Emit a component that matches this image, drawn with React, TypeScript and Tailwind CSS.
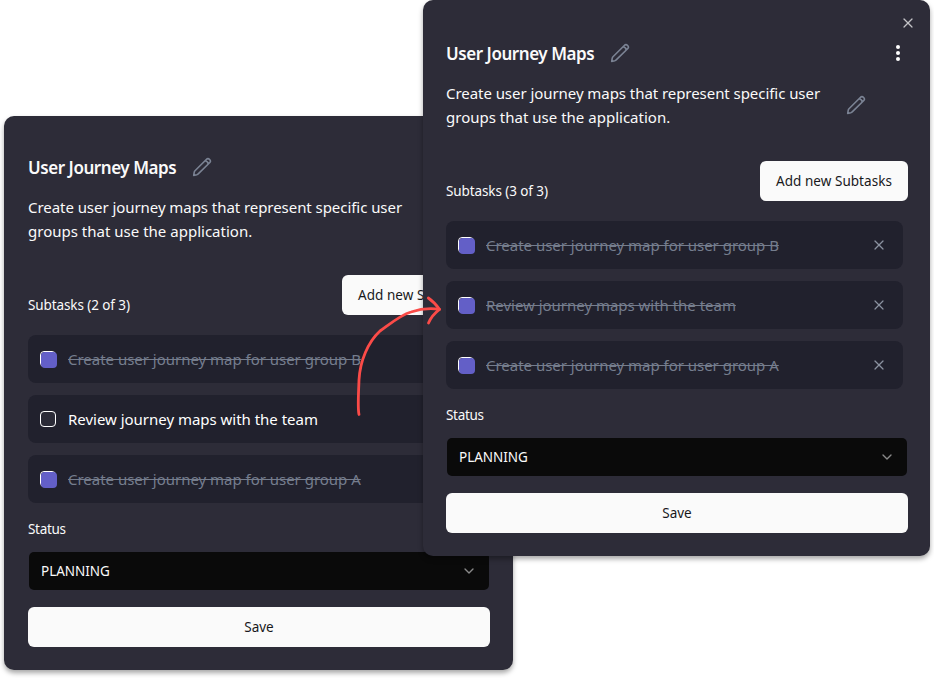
import React from "react";
import { X, ChevronDown } from "lucide-react";

type Subtask = { title: string; done: boolean };

function Pencil() {
  return (
    <svg className="size-5 shrink-0 text-[#7b8394]" viewBox="0 0 20 20" fill="none" stroke="currentColor" strokeWidth="1.6" strokeLinecap="round" strokeLinejoin="round">
      <path d="M14.300 2.500A2.300 2.300 0 0 1 17.600 5.800L6.200 16.900Q5.600 17.500 4.800 17.700L1.700 18.400L2.200 15.300Q2.400 14.400 3 13.800ZM13 3.800Q15.700 4.300 16.300 7" />
    </svg>
  );
}

function Checkbox({ checked }: { checked: boolean }) {
  return (
    <span className="block size-4 shrink-0 rounded-[4px] border border-white bg-[#2b2b37]">
      {checked && <span className="block size-4 rounded-[4px] bg-[#635fc7]" />}
    </span>
  );
}

function Row({ title, done }: Subtask) {
  return (
    <li className="flex h-12 w-[457px] items-center rounded-lg bg-[#21212d] pr-4 pl-3">
      <Checkbox checked={done} />
      <span className={`ml-3 flex-1 text-[15px] leading-6 tracking-[-0.02px] ${done ? "text-[#757d8d] line-through decoration-1" : "text-white"}`}>
        {title}
      </span>
      <X className="size-4 text-[#8b92a0]" strokeWidth={1.8} />
    </li>
  );
}

function TaskDialog({ subtasks, className }: { subtasks: Subtask[]; className: string }) {
  const done = subtasks.filter((s) => s.done).length;
  return (
    <section className={`absolute rounded-[10px] bg-[#2d2c38] text-[#fafafa] shadow-[0_3px_5px_rgba(0,0,0,0.35)] ${className}`}>
      <X className="absolute top-[15px] right-[14px] size-4 text-[#c3c3c7]" strokeWidth={1.8} />
      <div className="w-[462px]">
        <header className="flex h-7 items-center">
          <h2 className="w-[148px] text-[17px] leading-7 font-semibold tracking-[-0.45px] whitespace-nowrap">User Journey Maps</h2>
          <div className="-mt-0.5 ml-4"><Pencil /></div>
          <svg className="-mt-0.5 ml-auto h-5 w-5" viewBox="0 0 20 20" fill="white">
            <circle cx="10" cy="4" r="2" />
            <circle cx="10" cy="10" r="2" />
            <circle cx="10" cy="16" r="2" />
          </svg>
        </header>
        <div className="mt-[13px] flex items-center">
          <p className="w-[400px] text-[15px] leading-6 tracking-[-0.055px]">
            Create user journey maps that represent specific user
            <br />
            <span className="tracking-[0.01px]">groups that use the application.</span>
          </p>
          <Pencil />
        </div>
        <div className="mt-8 flex h-10 items-center justify-between">
          <h3 className="pt-5 text-[13.5px] leading-5 tracking-[-0.1px]">Subtasks ({done} of {subtasks.length})</h3>
          <button className="h-10 w-[148px] rounded-md bg-[#fafafa] text-[13.5px] tracking-[0.04px] whitespace-nowrap text-[#18181b]">
            Add new Subtasks
          </button>
        </div>
        <ul className="mt-5 flex flex-col gap-3">
          {subtasks.map((s) => <Row key={s.title} {...s} />)}
        </ul>
        <h3 className="mt-4 text-[13.5px] leading-5 tracking-[-0.3px]">Status</h3>
        <div className="mx-px mt-[13px] flex h-[38px] items-center justify-between rounded-[5px] bg-[#0a0a0a] px-3">
          <span className="text-[13.5px] tracking-[-0.04px]">PLANNING</span>
          <ChevronDown className="size-4 text-[#8a8a8a]" strokeWidth={2} />
        </div>
        <button className="mt-[17px] h-10 w-full rounded-md bg-[#fafafa] text-[13.5px] text-[#18181b]">Save</button>
      </div>
    </section>
  );
}

const groupB = "Create user journey map for user group B";
const review = "Review journey maps with the team";
const groupA = "Create user journey map for user group A";

export default function App() {
  return (
    <main className="relative h-[678px] w-[934px] overflow-hidden bg-white font-['Noto_Sans','Open_Sans',sans-serif]">
      <TaskDialog
        className="top-[116px] left-1 h-[554px] w-[509px] pt-[38px] pl-6"
        subtasks={[{ title: groupB, done: true }, { title: review, done: false }, { title: groupA, done: true }]}
      />
      <TaskDialog
        className="top-0 left-[423px] h-[556px] w-[507px] pt-10 pl-[23px]"
        subtasks={[{ title: groupB, done: true }, { title: review, done: true }, { title: groupA, done: true }]}
      />
      <svg className="absolute top-[290px] left-[350px] h-[130px] w-[100px]" viewBox="350 290 100 130" fill="none" stroke="#fb4b48" strokeWidth="2.8" strokeLinecap="round" strokeLinejoin="round">
        <path d="M359 414.500C357.500 408 358.500 395 359 380C360 361 368 342 380 331C386 327 400 315 411 312C420 309 430 308 439.500 309.300" />
        <path d="M428.300 298C432 300.500 436 304.500 439.500 309.300C434 313.500 431 317 428.500 323" />
      </svg>
    </main>
  );
}
